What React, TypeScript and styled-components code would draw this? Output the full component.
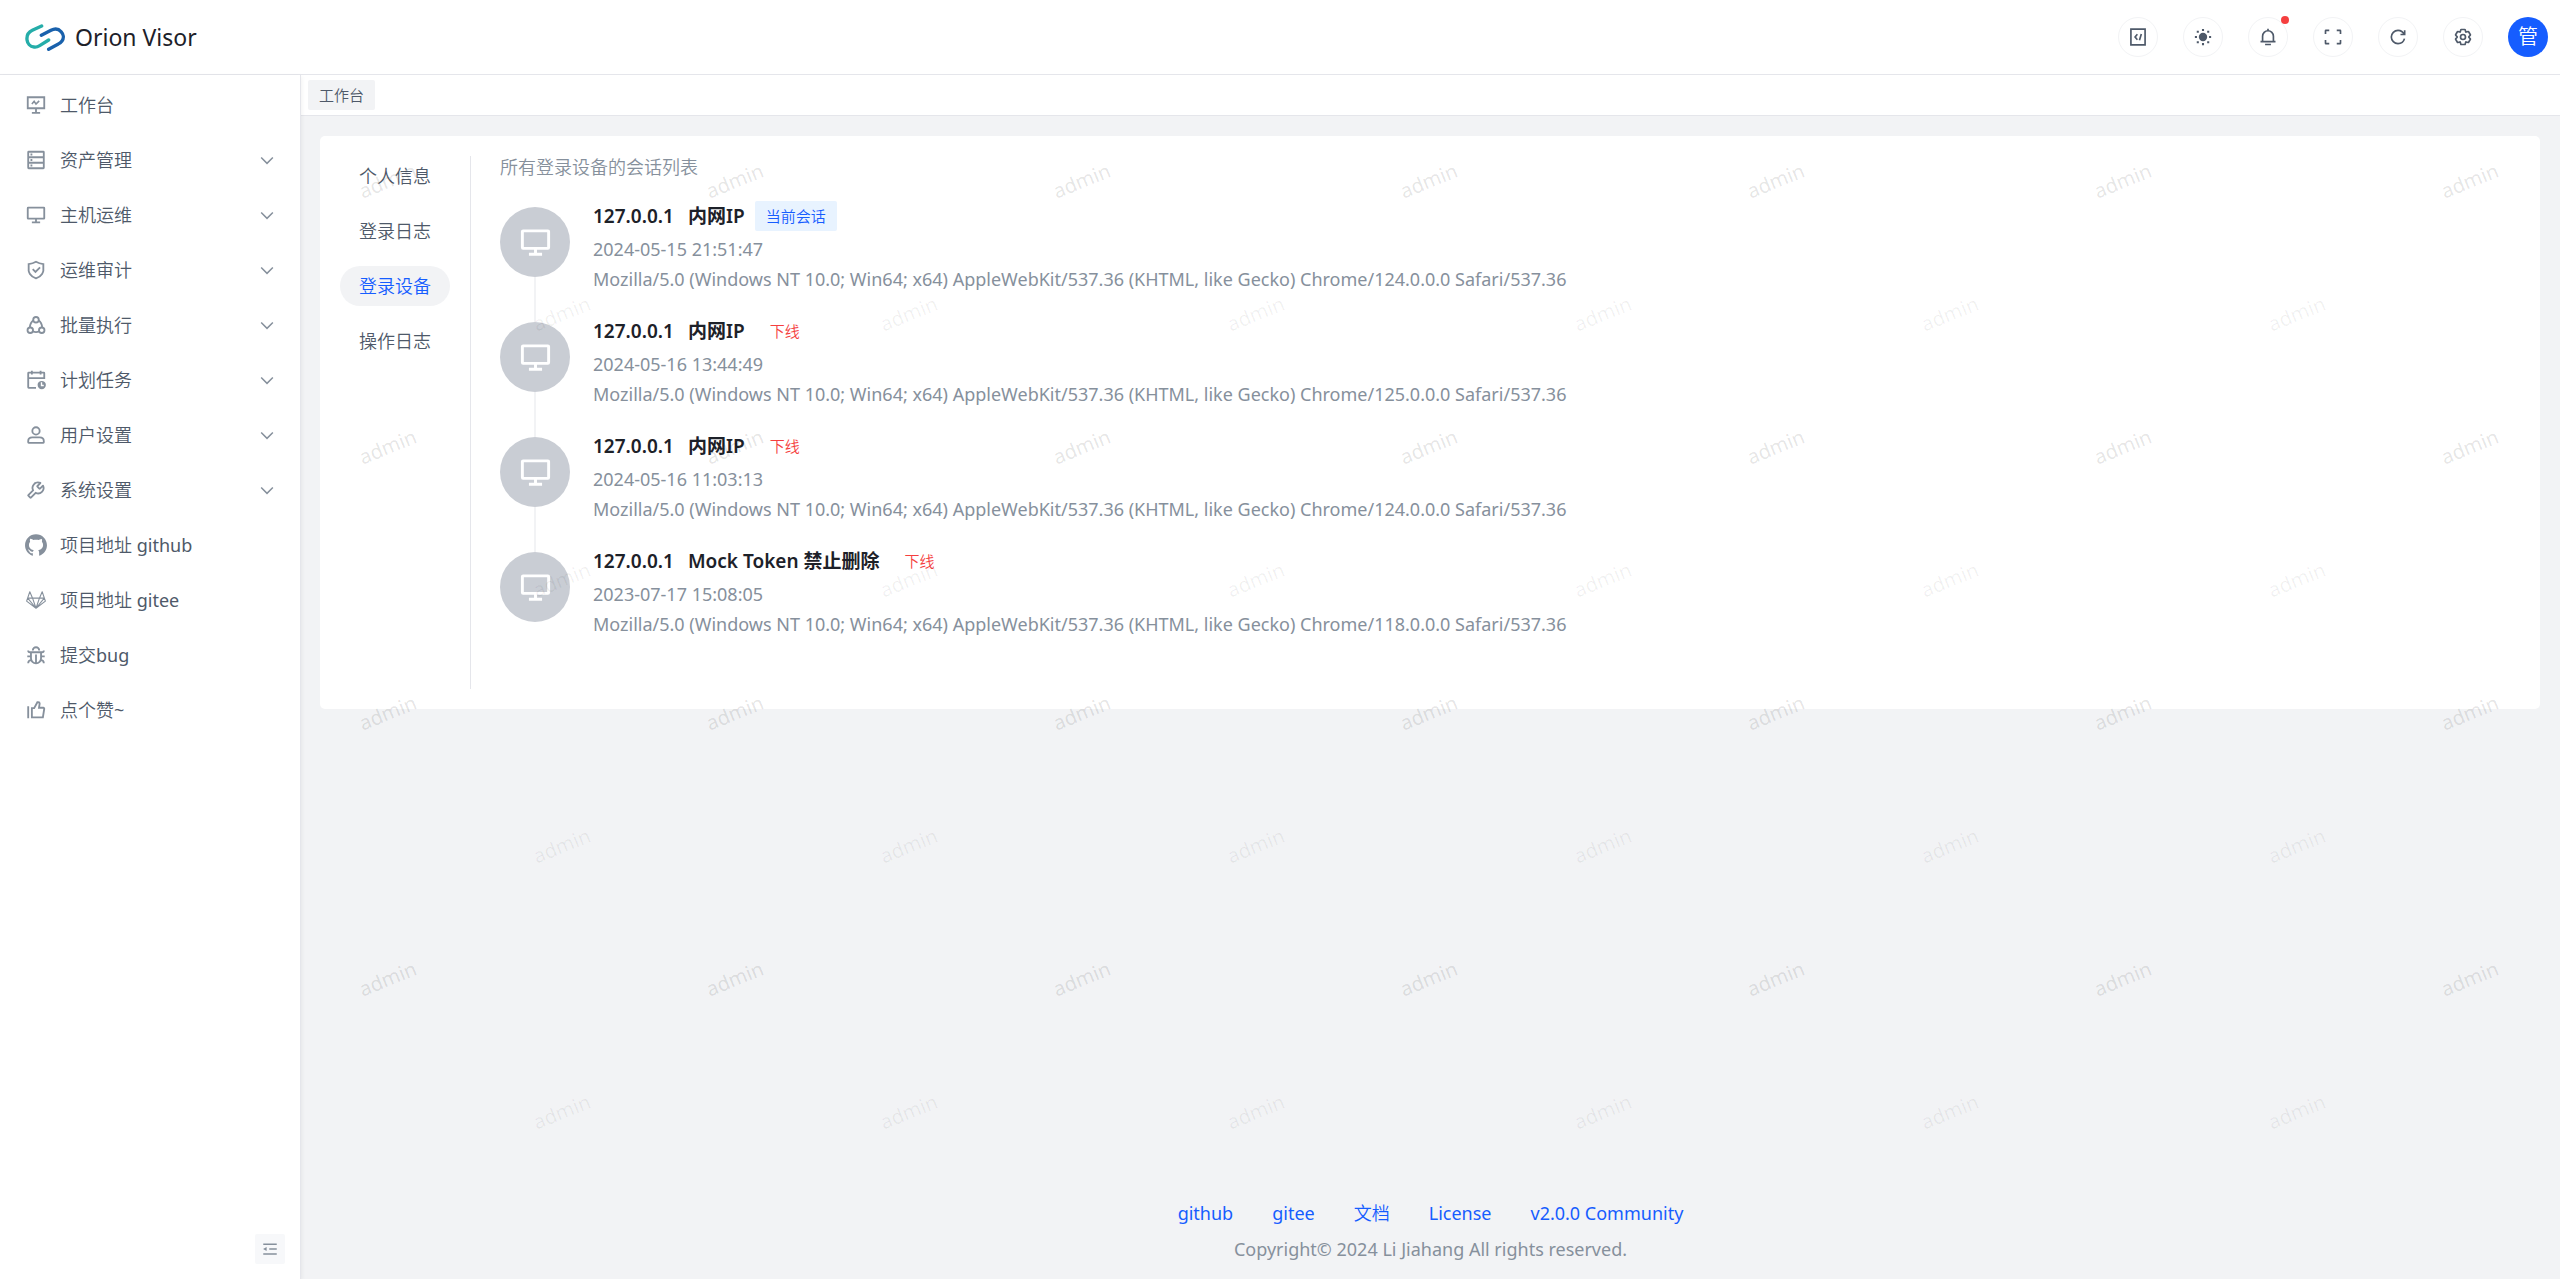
import React from "react";
import styled, { createGlobalStyle, css } from "styled-components";

const c = {
  text1: "#1d2129",
  text2: "#4e5969",
  text3: "#86909c",
  border: "#e5e6eb",
  fill1: "#f7f8fa",
  fill2: "#f2f3f5",
  disc: "#c9cdd4",
  primary: "#165dff",
  primaryLight: "#e8f3ff",
  danger: "#f53f3f",
};

const cjk = `"Noto Sans CJK SC DemiLight", "Noto Sans CJK SC", sans-serif`;

const Global = createGlobalStyle`
  * { box-sizing: border-box; }
  body {
    margin: 0;
    background: ${c.fill2};
    color: ${c.text1};
    font: 400 18px/30px "Noto Sans", ${cjk};
  }
  button { font: inherit; color: inherit; border: 0; background: none; padding: 0; cursor: pointer; }
  a { color: inherit; text-decoration: none; }
  h1, p, ul, ol { margin: 0; padding: 0; font: inherit; list-style: none; }
`;

/* ---------- icons ---------- */

const Svg = styled.svg<{ $size: number }>`
  width: ${(p) => p.$size}px;
  height: ${(p) => p.$size}px;
  flex: none;
  fill: none;
  stroke: currentColor;
  stroke-width: 4;
`;

const icons = {
  computer: (
    <>
      <path d="M42 7H6v24h36V7ZM24 31v9M15 41h18" />
      <path d="m15 22 5-6 4 6 7-7" strokeWidth="3.400" />
    </>
  ),
  storage: (
    <>
      <path d="M7 18h34v12H7V18ZM40 6H8a1 1 0 0 0-1 1v11h34V7a1 1 0 0 0-1-1ZM7 30h34v11a1 1 0 0 1-1 1H8a1 1 0 0 1-1-1V30Z" />
      <path d="M12 12h4M12 24h4M12 36h4" />
    </>
  ),
  desktop: (
    <path d="M24 32v8m0 0h-9m9 0h9M7 32h34a1 1 0 0 0 1-1V9a1 1 0 0 0-1-1H7a1 1 0 0 0-1 1v22a1 1 0 0 0 1 1Z" />
  ),
  safe: (
    <path d="m16.825 22.165 6 6 10-10M24 6c7 4 16 5 16 5v15s-2 12-16 16.027C10 38 8 26 8 26V11s9-1 16-5Z" />
  ),
  batch: (
    <>
      <circle cx="24" cy="12.500" r="6" />
      <circle cx="11.500" cy="35.500" r="6" />
      <circle cx="36.500" cy="35.500" r="6" />
      <path d="M18.500 13.500C14 16.500 11 22 10.500 29.500M29.500 13.500C34 16.500 37 22 37.500 29.500M17 38c4.500 2 9.500 2 14 0" />
    </>
  ),
  schedule: (
    <>
      <path d="M42 22V9a1 1 0 0 0-1-1H8a1 1 0 0 0-1 1v31a1 1 0 0 0 1 1h16M7 20h35M15 4v8M34 4v8" />
      <circle cx="36.500" cy="35" r="9" fill="currentColor" stroke="none" />
      <path d="M36 29v7h5" stroke="#fff" strokeWidth="3" />
    </>
  ),
  user: (
    <>
      <path d="M7 37c0-4.970 4.030-8 9-8h16c4.970 0 9 3.030 9 8v3a1 1 0 0 1-1 1H8a1 1 0 0 1-1-1v-3Z" />
      <circle cx="24" cy="15" r="8" />
    </>
  ),
  tool: (
    <path d="M19.994 11.035c3.660-3.659 9.094-4.460 13.531-2.405a.1.1 0 0 1 .028.160l-6.488 6.488a1 1 0 0 0 0 1.414l4.243 4.243a1 1 0 0 0 1.414 0l6.488-6.488a.1.1 0 0 1 .160.028c2.056 4.437 1.254 9.871-2.405 13.530-3.695 3.696-9.200 4.477-13.660 2.347L12.923 40.733a1 1 0 0 1-1.414 0L7.266 36.490a1 1 0 0 1 0-1.414l10.382-10.382c-2.130-4.460-1.349-9.965 2.346-13.660Z" />
  ),
  github: (
    <path
      fill="currentColor"
      stroke="none"
      d="M.056 24.618c0 10.454 6.700 19.344 16.038 22.608 1.259.320 1.067-.582 1.067-1.190v-4.148c-7.265.853-7.553-3.957-8.043-4.758-.987-1.686-3.312-2.112-2.620-2.912 1.654-.853 3.340.213 5.291 3.100 1.413 2.090 4.166 1.738 5.562 1.385a6.777 6.777 0 0 1 1.856-3.253C11.687 34.112 8.550 29.519 8.550 24.057c0-2.646.874-5.082 2.586-7.045-1.088-3.243.102-6.010.260-6.422 3.110-.282 6.337 2.225 6.587 2.421 1.766-.474 3.782-.730 6.038-.730 2.266 0 4.293.260 6.069.740.603-.458 3.600-2.608 6.490-2.345.155.410 1.317 3.120.294 6.315 1.734 1.968 2.620 4.422 2.620 7.077 0 5.472-3.158 10.070-10.699 11.397a6.820 6.820 0 0 1 2.037 4.875v6.020c.042.480 0 .960.806.960 9.477-3.194 16.299-12.150 16.299-22.697C47.938 11.396 37.218.680 23.996.680 10.770.675.055 11.391.055 24.617l.001.001Z"
    />
  ),
  gitlab: (
    <path
      strokeWidth="2.400"
      strokeLinejoin="round"
      d="M10.500 6 3.500 26.500 24 42l20.500-15.500L37.500 6 31.500 20h-15L10.500 6ZM16.500 20 24 42l7.500-22M16.500 20H6L24 42l18-22H31.500"
    />
  ),
  bug: (
    <path d="M24 42c-6.075 0-11-4.925-11-11V18h22v13c0 6.075-4.925 11-11 11Zm0 0V23m11 4h8M5 27h8M7 14a4 4 0 0 0 4 4h26a4 4 0 0 0 4-4m0 28v-.500a6.500 6.500 0 0 0-6.500-6.500M7 42v-.500a6.500 6.500 0 0 1 6.500-6.500M17 14a7 7 0 1 1 14 0" />
  ),
  thumb: (
    <path d="M7 16v26M15 40V20h5l7-13h2a3 3 0 0 1 3 3l-1.500 9H40a2 2 0 0 1 2 2.300L39 40H15Z" />
  ),
  down: <path d="M39.600 17.443 24.043 33 8.487 17.443" />,
  code: <path d="M7 5h34v38H7zM22.500 17.500 17 24l5.500 6.500M32 17l-4.500 15" />,
  sun: (
    <>
      <circle cx="24" cy="24" r="10" fill="currentColor" stroke="none" />
      <path
        strokeWidth="5"
        d="M24 4.500v5M24 38.500v5M4.500 24h5M38.500 24h5M9 11.500h5M34 11.500h5M9 36.500h5M34 36.500h5"
      />
    </>
  ),
  bell: <path d="M24 9c7.180 0 13 5.820 13 13v13H11V22c0-7.180 5.820-13 13-13Zm0 0V4M6 35h36m-25 7h14" />,
  fullscreen: (
    <path d="M42 17V9a1 1 0 0 0-1-1h-8M6 17V9a1 1 0 0 1 1-1h8m27 23v8a1 1 0 0 1-1 1h-8M6 31v8a1 1 0 0 0 1 1h8" />
  ),
  refresh: (
    <path d="M38.837 18C36.463 12.136 30.715 8 24 8 15.163 8 8 15.163 8 24s7.163 16 16 16c7.455 0 13.720-5.100 15.496-12M40 8v10H30" />
  ),
  settings: (
    <>
      <path d="M18.797 6.732A1 1 0 0 1 19.760 6h8.480a1 1 0 0 1 .964.732l1.285 4.628a1 1 0 0 0 1.213.700l4.651-1.200a1 1 0 0 1 1.116.468l4.240 7.344a1 1 0 0 1-.153 1.200L38.193 23.300a1 1 0 0 0 0 1.402l3.364 3.427a1 1 0 0 1 .153 1.200l-4.240 7.344a1 1 0 0 1-1.116.468l-4.650-1.200a1 1 0 0 0-1.214.700l-1.285 4.628a1 1 0 0 1-.964.732h-8.480a1 1 0 0 1-.963-.732L17.510 36.640a1 1 0 0 0-1.213-.700l-4.650 1.200a1 1 0 0 1-1.116-.468l-4.240-7.344a1 1 0 0 1 .153-1.200L9.809 24.700a1 1 0 0 0 0-1.402l-3.364-3.427a1 1 0 0 1-.153-1.200l4.240-7.344a1 1 0 0 1 1.116-.468l4.650 1.200a1 1 0 0 0 1.213-.700l1.286-4.628Z" />
      <circle cx="24" cy="24" r="6" />
    </>
  ),
  fold: (
    <>
      <path d="M42 11H6M42 24H22M42 37H6" />
      <path fill="currentColor" stroke="none" d="M15 29.500 5.500 24l9.500-5.500z" />
    </>
  ),
};

type IconName = keyof typeof icons;

const Icon = ({ name, size }: { name: IconName; size: number }) => (
  <Svg $size={size} viewBox="0 0 48 48" aria-hidden="true">
    {icons[name]}
  </Svg>
);

/* ---------- header ---------- */

const Header = styled.header`
  display: flex;
  align-items: center;
  justify-content: space-between;
  height: 75px;
  padding: 0 12px 0 25px;
  background: #fff;
  border-bottom: 1px solid ${c.border};
`;

const Brand = styled.div`
  display: flex;
  align-items: center;
  gap: 10px;
`;

const LogoSvg = styled.svg`
  width: 40px;
  height: 27px;
  fill: none;
  stroke-width: 10;
  stroke-linecap: round;
`;

const BrandName = styled.h1`
  font-size: 23px;
`;

const Tools = styled.div`
  display: flex;
  align-items: center;
  gap: 25px;
`;

const RoundButton = styled.button`
  position: relative;
  display: grid;
  place-items: center;
  width: 40px;
  height: 40px;
  border: 1px solid ${c.fill2};
  border-radius: 50%;
  color: ${c.text2};
`;

const Dot = styled.span`
  position: absolute;
  top: -2px;
  right: -2px;
  width: 8px;
  height: 8px;
  border-radius: 50%;
  background: ${c.danger};
`;

const Avatar = styled.button`
  display: grid;
  place-items: center;
  width: 40px;
  height: 40px;
  border-radius: 50%;
  background: ${c.primary};
  color: #fff;
  font-size: 20px;
`;

/* ---------- sidebar ---------- */

const Page = styled.div`
  display: flex;
  flex-direction: column;
  min-height: 100vh;
`;

const Body = styled.div`
  display: flex;
  flex: 1;
`;

const Sidebar = styled.aside`
  z-index: 1;
  display: flex;
  flex-direction: column;
  flex: none;
  width: 301px;
  padding: 5px 15px 15px;
  background: #fff;
  border-right: 1px solid ${c.border};
  box-shadow: 0 2px 5px rgba(0, 0, 0, 0.08);
`;

const Menu = styled.ul`
  display: flex;
  flex-direction: column;
  gap: 5px;
`;

const rowStyle = css`
  display: flex;
  align-items: center;
  gap: 13px;
  width: 100%;
  height: 50px;
  padding: 0 9px 0 10px;
  color: ${c.text3};
`;

const MenuButton = styled.button`
  ${rowStyle}
`;

const MenuLink = styled.a`
  ${rowStyle}
`;

const MenuText = styled.span`
  flex: 1;
  text-align: left;
  color: ${c.text2};
`;

const FoldButton = styled.button`
  display: grid;
  place-items: center;
  align-self: flex-end;
  width: 30px;
  height: 30px;
  margin-top: auto;
  border-radius: 2px;
  background: ${c.fill1};
  color: ${c.text3};
`;

/* ---------- main ---------- */

const Main = styled.main`
  display: flex;
  flex-direction: column;
  flex: 1;
  min-width: 0;
`;

const TabBar = styled.div`
  display: flex;
  align-items: center;
  height: 41px;
  padding: 0 7px;
  background: #fff;
  border-bottom: 1px solid ${c.border};
`;

const PageTab = styled.button`
  height: 30px;
  padding: 0 11px;
  border-radius: 2px;
  background: ${c.fill2};
  color: ${c.text2};
  font-size: 15px;
`;

const Content = styled.div`
  position: relative;
  flex: 1;
  padding: 20px 20px 20px 19px;
`;

const Card = styled.section`
  display: flex;
  padding: 20px;
  background: #fff;
  border-radius: 5px;
`;

const SideTabs = styled.nav`
  display: flex;
  flex-direction: column;
  gap: 15px;
  padding-right: 20px;
  border-right: 1px solid ${c.border};
`;

const SideTab = styled.button<{ $active: boolean }>`
  height: 40px;
  padding: 0 19px;
  border-radius: 20px;
  color: ${(p) => (p.$active ? c.primary : c.text2)};
  background: ${(p) => (p.$active ? c.fill2 : "transparent")};
`;

const Sessions = styled.div`
  flex: 1;
  padding: 0 0 50px 29px;
`;

const Hint = styled.p`
  margin-bottom: 23px;
  line-height: 22px;
  color: ${c.text3};
`;

const Session = styled.li`
  display: flex;
  gap: 23px;
  padding-bottom: 22px;

  &:last-child {
    padding-bottom: 0;
  }
`;

const Rail = styled.div`
  display: flex;
  flex-direction: column;
  align-items: center;
  padding-top: 6px;

  &::after {
    content: "";
    flex: 1;
    width: 2px;
    margin-bottom: -28px;
    background: ${c.fill2};
  }

  ${Session}:last-child &::after {
    display: none;
  }
`;

const Disc = styled.div`
  display: grid;
  place-items: center;
  width: 70px;
  height: 70px;
  border-radius: 50%;
  background: ${c.disc};
  color: #fff;
`;

const Heading = styled.div`
  display: flex;
  align-items: center;
  height: 30px;
  margin-bottom: 3px;
  font-size: 19px;
  font-weight: 600;
  font-family: "Noto Sans", "Noto Sans CJK SC", sans-serif;
`;

const Place = styled.span`
  margin: 0 10px 0 14px;
`;

const CurrentTag = styled.span`
  height: 30px;
  padding: 0 11px;
  border-radius: 2px;
  background: ${c.primaryLight};
  color: ${c.primary};
  font: 400 15px/30px ${cjk};
`;

const OfflineButton = styled.button`
  height: 30px;
  padding: 0 15px;
  color: ${c.danger};
  font: 400 15px/30px ${cjk};
`;

const Detail = styled.p`
  color: ${c.text3};
`;

/* ---------- watermark ---------- */

const Watermark = styled.div`
  position: absolute;
  inset: 0;
  overflow: hidden;
  pointer-events: none;
  user-select: none;
`;

const MarkRow = styled.div<{ $shifted: boolean }>`
  display: flex;
  align-items: center;
  height: 133px;
  padding-left: ${(p) => (p.$shifted ? 231 : 57)}px;
  color: ${(p) => (p.$shifted ? "rgba(0, 0, 0, 0.06)" : "rgba(0, 0, 0, 0.11)")};
  font-size: 20px;
  line-height: 26px;
`;

const MarkCell = styled.span`
  flex: 0 0 347px;
  padding-bottom: 4px;
`;

const Mark = styled.span`
  display: inline-block;
  transform: rotate(-22deg);
`;

/* ---------- footer ---------- */

const Footer = styled.footer`
  display: flex;
  flex-direction: column;
  align-items: center;
  gap: 6px;
  padding-bottom: 15px;
  color: ${c.text3};
`;

const FooterLinks = styled.nav`
  display: flex;
  gap: 39px;
  color: ${c.primary};
`;

/* ---------- data ---------- */

const tools: { icon: IconName; label: string; dot?: boolean }[] = [
  { icon: "code", label: "代码" },
  { icon: "sun", label: "主题" },
  { icon: "bell", label: "消息", dot: true },
  { icon: "fullscreen", label: "全屏" },
  { icon: "refresh", label: "刷新" },
  { icon: "settings", label: "设置" },
];

const menu: { icon: IconName; text: string; kind: "page" | "group" | "link" }[] = [
  { icon: "computer", text: "工作台", kind: "page" },
  { icon: "storage", text: "资产管理", kind: "group" },
  { icon: "desktop", text: "主机运维", kind: "group" },
  { icon: "safe", text: "运维审计", kind: "group" },
  { icon: "batch", text: "批量执行", kind: "group" },
  { icon: "schedule", text: "计划任务", kind: "group" },
  { icon: "user", text: "用户设置", kind: "group" },
  { icon: "tool", text: "系统设置", kind: "group" },
  { icon: "github", text: "项目地址 github", kind: "link" },
  { icon: "gitlab", text: "项目地址 gitee", kind: "link" },
  { icon: "bug", text: "提交bug", kind: "link" },
  { icon: "thumb", text: "点个赞~", kind: "link" },
];

const sideTabs = ["个人信息", "登录日志", "登录设备", "操作日志"];

const agent = (chrome: number) =>
  `Mozilla/5.0 (Windows NT 10.0; Win64; x64) AppleWebKit/537.36 (KHTML, like Gecko) Chrome/${chrome}.0.0.0 Safari/537.36`;

const sessions = [
  { place: "内网IP", time: "2024-05-15 21:51:47", chrome: 124, current: true },
  { place: "内网IP", time: "2024-05-16 13:44:49", chrome: 125, current: false },
  { place: "内网IP", time: "2024-05-16 11:03:13", chrome: 124, current: false },
  { place: "Mock Token 禁止删除", time: "2023-07-17 15:08:05", chrome: 118, current: false },
];

const footerLinks = ["github", "gitee", "文档", "License", "v2.0.0 Community"];

/* Full rows hold seven marks, the rows shifted by half a step hold six. */
const markRows = [7, 6, 7, 6, 7, 6, 7, 6];

export default function App() {
  const [tab, setTab] = React.useState(2);

  return (
    <Page>
      <Global />
      <Header>
        <Brand>
          <LogoSvg viewBox="75 70 120 81" aria-hidden="true">
            <path stroke="#25ada9" d="M125 76 97 89C72 101 78 137 102 139C109 140 114 138 119 135L146 118" />
            <path stroke="#1961ac" d="M124 104 153 89C178 76 199 103 186 121C183 125 180 128 175 130L146 146" />
          </LogoSvg>
          <BrandName>Orion Visor</BrandName>
        </Brand>
        <Tools>
          {tools.map((t) => (
            <RoundButton key={t.icon} aria-label={t.label}>
              <Icon name={t.icon} size={20} />
              {t.dot && <Dot />}
            </RoundButton>
          ))}
          <Avatar>管</Avatar>
        </Tools>
      </Header>
      <Body>
        <Sidebar>
          <Menu>
            {menu.map((m) => (
              <li key={m.text}>
                {m.kind === "link" ? (
                  <MenuLink href="#">
                    <Icon name={m.icon} size={22} />
                    <MenuText>{m.text}</MenuText>
                  </MenuLink>
                ) : (
                  <MenuButton>
                    <Icon name={m.icon} size={22} />
                    <MenuText>{m.text}</MenuText>
                    {m.kind === "group" && <Icon name="down" size={18} />}
                  </MenuButton>
                )}
              </li>
            ))}
          </Menu>
          <FoldButton aria-label="收起菜单">
            <Icon name="fold" size={18} />
          </FoldButton>
        </Sidebar>
        <Main>
          <TabBar>
            <PageTab>工作台</PageTab>
          </TabBar>
          <Content>
            <Card>
              <SideTabs>
                {sideTabs.map((label, i) => (
                  <SideTab key={label} $active={i === tab} onClick={() => setTab(i)}>
                    {label}
                  </SideTab>
                ))}
              </SideTabs>
              <Sessions>
                <Hint>所有登录设备的会话列表</Hint>
                <ol>
                  {sessions.map((s) => (
                    <Session key={s.time}>
                      <Rail>
                        <Disc>
                          <Icon name="desktop" size={35} />
                        </Disc>
                      </Rail>
                      <div>
                        <Heading>
                          <span>127.0.0.1</span>
                          <Place>{s.place}</Place>
                          {s.current ? (
                            <CurrentTag>当前会话</CurrentTag>
                          ) : (
                            <OfflineButton>下线</OfflineButton>
                          )}
                        </Heading>
                        <Detail>{s.time}</Detail>
                        <Detail>{agent(s.chrome)}</Detail>
                      </div>
                    </Session>
                  ))}
                </ol>
              </Sessions>
            </Card>
            <Watermark aria-hidden="true">
              {markRows.map((count, r) => (
                <MarkRow key={r} $shifted={count === 6}>
                  {Array.from({ length: count }, (_, i) => (
                    <MarkCell key={i}>
                      <Mark>admin</Mark>
                    </MarkCell>
                  ))}
                </MarkRow>
              ))}
            </Watermark>
          </Content>
          <Footer>
            <FooterLinks>
              {footerLinks.map((l) => (
                <a key={l} href="#">
                  {l}
                </a>
              ))}
            </FooterLinks>
            <p>Copyright© 2024 Li Jiahang All rights reserved.</p>
          </Footer>
        </Main>
      </Body>
    </Page>
  );
}
